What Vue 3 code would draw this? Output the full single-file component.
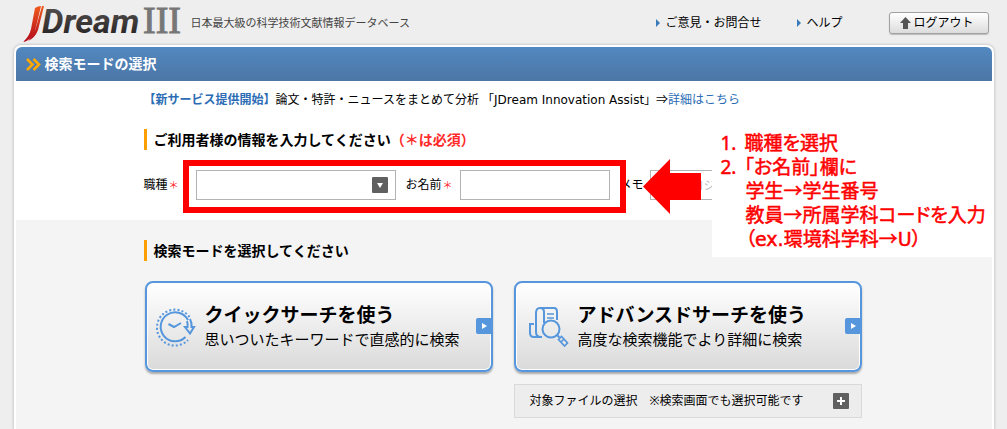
<script setup>
import { ref } from 'vue'

const job = ref('')
const userName = ref('')
const memo = ref('')
</script>

<template>
  <div class="page">
    <header class="top">
      <a class="logo" href="#" aria-label="JDream III">
        <svg width="162" height="45" viewBox="0 0 162 45">
          <defs>
            <linearGradient id="flame" x1="0" y1="0" x2="0" y2="1">
              <stop offset="0" stop-color="#ef5a1c" />
              <stop offset="1" stop-color="#b3071b" />
            </linearGradient>
            <linearGradient id="ink" x1="0" y1="0" x2="0" y2="1">
              <stop offset="0" stop-color="#5b5858" />
              <stop offset="1" stop-color="#231d1d" />
            </linearGradient>
          </defs>
          <path fill="url(#flame)" d="M12 8 Q15 6 18 6 L12 31 Q9 40 0 42 Q6 37 8 29 Z" />
          <path fill="url(#flame)" d="M19 6 L21 6 L15 30 Q12 38 5 41 Q10 36 12.500 29 Z" />
          <text class="logo-word" x="19" y="33" fill="url(#ink)">Dream</text>
          <text class="logo-num" x="120" y="33">III</text>
        </svg>
      </a>
      <p class="tagline">日本最大級の科学技術文献情報データベース</p>
      <nav class="nav">
        <a class="nav-link" href="#">ご意見・お問合せ</a>
        <a class="nav-link" href="#">ヘルプ</a>
        <button class="logout" type="button">
          <svg width="11" height="12" viewBox="0 0 11 12">
            <path fill="#555" d="M5.500 0 L11 6 H8 V12 H3 V6 H0 Z" />
          </svg>
          ログアウト
        </button>
      </nav>
    </header>

    <main class="shell">
      <div class="title-bar">
        <svg width="15" height="13" viewBox="0 0 15 13" fill="none" stroke="#ffa800" stroke-width="2.600">
          <path d="M1 1 L6.500 6.500 L1 12 M7.500 1 L13 6.500 L7.500 12" />
        </svg>
        <h1>検索モードの選択</h1>
      </div>

      <section class="info">
        <div class="inner">
          <p class="news">
            <strong>【新サービス提供開始】</strong>論文・特許・ニュースをまとめて分析 「<span class="latin">JDream Innovation Assist</span>」⇒<a href="#">詳細はこちら</a>
          </p>
          <h2>ご利用者様の情報を入力してください<span class="need">（＊は必須）</span></h2>
          <form class="form" @submit.prevent>
            <label class="job-label" for="job">職種<span class="star">＊</span></label>
            <div class="select">
              <select id="job" v-model="job">
                <option value=""></option>
                <option value="student">学生</option>
                <option value="teacher">教員</option>
              </select>
              <svg class="caret" width="16" height="16" viewBox="0 0 16 16">
                <rect width="16" height="16" rx="1" fill="#606060" />
                <path fill="#fff" d="M5 6 H11 L8 11 Z" />
              </svg>
            </div>
            <label class="name-label" for="name">お名前<span class="star">＊</span></label>
            <input id="name" v-model="userName" class="name" type="text" />
            <label class="memo-label" for="memo">メモ</label>
            <input id="memo" v-model="memo" class="memo" type="text" placeholder="例）プロジェクト名" />
          </form>

          <div class="frame"></div>
          <svg class="pointer" width="58" height="55" viewBox="0 0 58 55">
            <path fill="#f00" d="M0 27.500 L27 0 V14 H58 V41 H27 V55 Z" />
          </svg>
          <div class="note">
            <p><span class="num">1.</span>職種を選択</p>
            <p><span class="num">2.</span>「お名前」欄に</p>
            <p class="sub">学生→学生番号</p>
            <p class="sub">教員→所属学科コードを入力</p>
            <p class="sub">（<span class="latin">ex.</span>環境科学科→<span class="latin">U</span>）</p>
          </div>
        </div>
      </section>

      <section class="modes">
        <div class="inner">
          <h2>検索モードを選択してください</h2>
          <div class="cards">
            <button class="card" type="button">
              <svg class="card-icon" width="40" height="40" viewBox="0 0 40 40" fill="none" stroke="#5596dc" stroke-width="2">
                <path stroke-dasharray="2 2.100" d="M33.500 10 A18 18 0 1 0 32 33" />
                <path d="M32 13 A14.500 14.500 0 1 0 29.500 30" />
                <path d="M12.500 17 L18 20 L25 16" />
                <path d="M34 12 Q36 16 35.500 20 H38 L34 26.500 L29 20 H31.500 Q32 17 31 14" />
              </svg>
              <span class="card-text">
                <span class="card-title">クイックサーチを使う</span>
                <span class="card-sub">思いついたキーワードで直感的に検索</span>
              </span>
              <svg class="go" width="15" height="16" viewBox="0 0 15 16">
                <path fill="#5596dc" d="M2 0 H15 V16 H2 Q0 16 0 14 V2 Q0 0 2 0 Z" />
                <path fill="#fff" d="M6 5 L11 8 L6 11 Z" />
              </svg>
            </button>
            <button class="card advanced" type="button">
              <svg class="card-icon" width="40" height="40" viewBox="0 0 40 40" fill="none" stroke="#5596dc" stroke-width="2">
                <path d="M13 30 H5 Q1 30 1 26 V17 H5" />
                <path d="M12 30 Q7 30 7 25 V6 Q7 1 11 1 H25 Q28 1 28 5 V13" />
                <path d="M11 1 Q15 1 15 5 V16" />
                <path d="M18 7 H25 M18 11 H25" stroke-width="1.500" />
                <circle cx="22" cy="22" r="8.500" />
                <path d="M28 28 L30.500 30.500" />
                <path d="M29.500 32.500 L32.500 29.500 L38.500 36 L35.500 39 Z M32 35 L35 32" stroke-width="1.700" />
              </svg>
              <span class="card-text">
                <span class="card-title">アドバンスドサーチを使う</span>
                <span class="card-sub">高度な検索機能でより詳細に検索</span>
              </span>
              <svg class="go" width="15" height="16" viewBox="0 0 15 16">
                <path fill="#5596dc" d="M2 0 H15 V16 H2 Q0 16 0 14 V2 Q0 0 2 0 Z" />
                <path fill="#fff" d="M6 5 L11 8 L6 11 Z" />
              </svg>
            </button>
            <div class="files">
              <span>対象ファイルの選択　※検索画面でも選択可能です</span>
              <button class="plus" type="button" aria-label="開く">
                <svg width="16" height="16" viewBox="0 0 16 16">
                  <rect width="16" height="16" rx="1" fill="#606060" />
                  <path fill="#fff" d="M7 4 H9 V7 H12 V9 H9 V12 H7 V9 H4 V7 H7 Z" />
                </svg>
              </button>
            </div>
          </div>
        </div>
      </section>
    </main>
  </div>
</template>

<style>
body {
  margin: 0;
  background: #eee;
}
</style>

<style scoped>
* {
  box-sizing: border-box;
}

.page {
  display: flex;
  flex-direction: column;
  min-height: 100vh;
  max-width: 980px;
  margin: 0 auto;
  font-family: "Noto Sans", "Noto Sans CJK JP", sans-serif;
  font-size: 12px;
  line-height: 18px;
  color: #000;
}

h1,
h2,
p {
  margin: 0;
}

button,
input,
select {
  font: inherit;
  color: inherit;
}

a {
  color: #2b6cb5;
  text-decoration: none;
}

.latin {
  font-family: "DejaVu Sans", sans-serif;
}

.top {
  display: flex;
  align-items: center;
  height: 45px;
  padding: 0 5px 0 9px;
}

.logo svg {
  display: block;
}

.logo-word {
  font-family: Roboto, sans-serif;
  font-size: 34px;
  font-weight: 700;
  font-style: italic;
}

.logo-num {
  font-family: "Liberation Serif", serif;
  font-size: 38px;
  fill: #777;
  stroke: #777;
  stroke-width: 1px;
}

.tagline {
  margin-left: 6px;
  font-size: 11px;
  color: #444;
}

.nav {
  display: flex;
  align-items: center;
  margin-left: auto;
}

.nav-link {
  display: flex;
  align-items: center;
  gap: 5px;
  margin-right: 36px;
  color: #000;
}

.nav-link::before {
  content: "";
  border: 4px solid transparent;
  border-left-color: #3a7ab8;
  border-right: 0;
}

.logout {
  display: flex;
  align-items: center;
  gap: 3px;
  width: 100px;
  height: 22px;
  margin-left: 10px;
  padding: 0 10px;
  border: 1px solid #a0a0a0;
  border-radius: 3px;
  background: linear-gradient(#fff, #dcdcdc);
  box-shadow: 0 1px 1px #bbb;
}

.shell {
  display: flex;
  flex: 1;
  flex-direction: column;
  border: 2px solid #fff;
  border-bottom: 0;
  border-radius: 7px 7px 0 0;
  background: #f4f4f4;
  box-shadow: 0 0 3px #aaa;
}

.title-bar {
  display: flex;
  align-items: center;
  gap: 4px;
  height: 34px;
  padding-left: 10px;
  border-radius: 6px 6px 0 0;
  background: linear-gradient(#5288c1, #4b76a5);
  color: #fff;
}

h1 {
  font-size: 14px;
  line-height: 20px;
}

.info {
  background: #fff;
}

.inner {
  position: relative;
  max-width: 720px;
  margin: 0 auto;
}

.info .inner {
  padding: 10px 0 20px;
}

.news strong {
  color: #2b6cb5;
}

h2 {
  padding-left: 7px;
  border-left: 3px solid #ff9e00;
  font-size: 14px;
  line-height: 21px;
}

.info h2 {
  margin: 20px 0;
}

.need,
.star {
  color: #ff2a2a;
}

.star {
  margin-left: 1px;
  font-size: 10px;
}

.form {
  display: flex;
  align-items: center;
  height: 30px;
}

.job-label {
  width: 52px;
}

.name-label {
  width: 54px;
  margin-left: 10px;
}

.memo-label {
  width: 30px;
  margin-left: 10px;
}

.job-label,
.name-label,
.memo-label {
  flex: none;
  white-space: nowrap;
}

.select {
  position: relative;
  flex: none;
  width: 200px;
}

.form select,
.form input {
  display: block;
  height: 30px;
  border: 1px solid #b3b3b3;
  border-radius: 0;
  background: #fff;
  padding: 0 5px;
}

.form select {
  width: 100%;
  appearance: none;
}

.caret {
  position: absolute;
  top: 7px;
  right: 8px;
  pointer-events: none;
}

.name {
  width: 150px;
}

.memo {
  flex: 1;
  min-width: 0;
}

.memo::placeholder {
  color: #bbb;
}

.frame {
  position: absolute;
  top: 79px;
  left: 39px;
  width: 443px;
  height: 53px;
  border: 6px solid #f00;
  pointer-events: none;
}

.pointer {
  position: absolute;
  top: 78px;
  left: 499px;
}

.note {
  position: absolute;
  z-index: 1;
  top: 44px;
  left: 568px;
  width: 281px;
  padding: 6px 0 6px 9px;
  background: #fff;
  color: #f00;
  font-size: 19px;
  line-height: 24px;
  font-feature-settings: "palt";
  -webkit-text-stroke: 0.5px #f00;
  white-space: nowrap;
}

.num {
  display: inline-block;
  width: 24px;
}

.sub {
  padding-left: 25px;
}

.modes .inner {
  padding: 20px 0 12px;
}

.cards {
  display: grid;
  grid-template-columns: 1fr 1fr;
  gap: 12px 21px;
  margin-top: 20px;
  padding: 0 2px 0 1px;
}

.card {
  position: relative;
  display: flex;
  align-items: center;
  gap: 9px;
  height: 91px;
  padding: 0 9px;
  border: 2px solid #5596dc;
  border-radius: 8px;
  background: linear-gradient(#fff, #dadada);
  box-shadow: inset 0 0 0 1px #fff, 0 2px 2px #aaa;
  text-align: left;
}

.advanced {
  padding-left: 13px;
}

.card-icon {
  flex: none;
}

.card-text {
  display: flex;
  flex-direction: column;
}

.card-title {
  font-size: 19px;
  font-weight: 700;
  line-height: 24px;
}

.card-sub {
  font-size: 15px;
  line-height: 24px;
}

.go {
  position: absolute;
  right: 0;
  top: 35px;
}

.files {
  grid-column: 2;
  display: flex;
  align-items: center;
  justify-content: space-between;
  height: 34px;
  padding: 0 12px 0 15px;
  border: 1px solid #d9d9d9;
  background: #ededed;
}

.plus {
  display: block;
  width: 16px;
  height: 16px;
  padding: 0;
  border: 0;
  background: none;
}

.plus svg {
  display: block;
}
</style>
